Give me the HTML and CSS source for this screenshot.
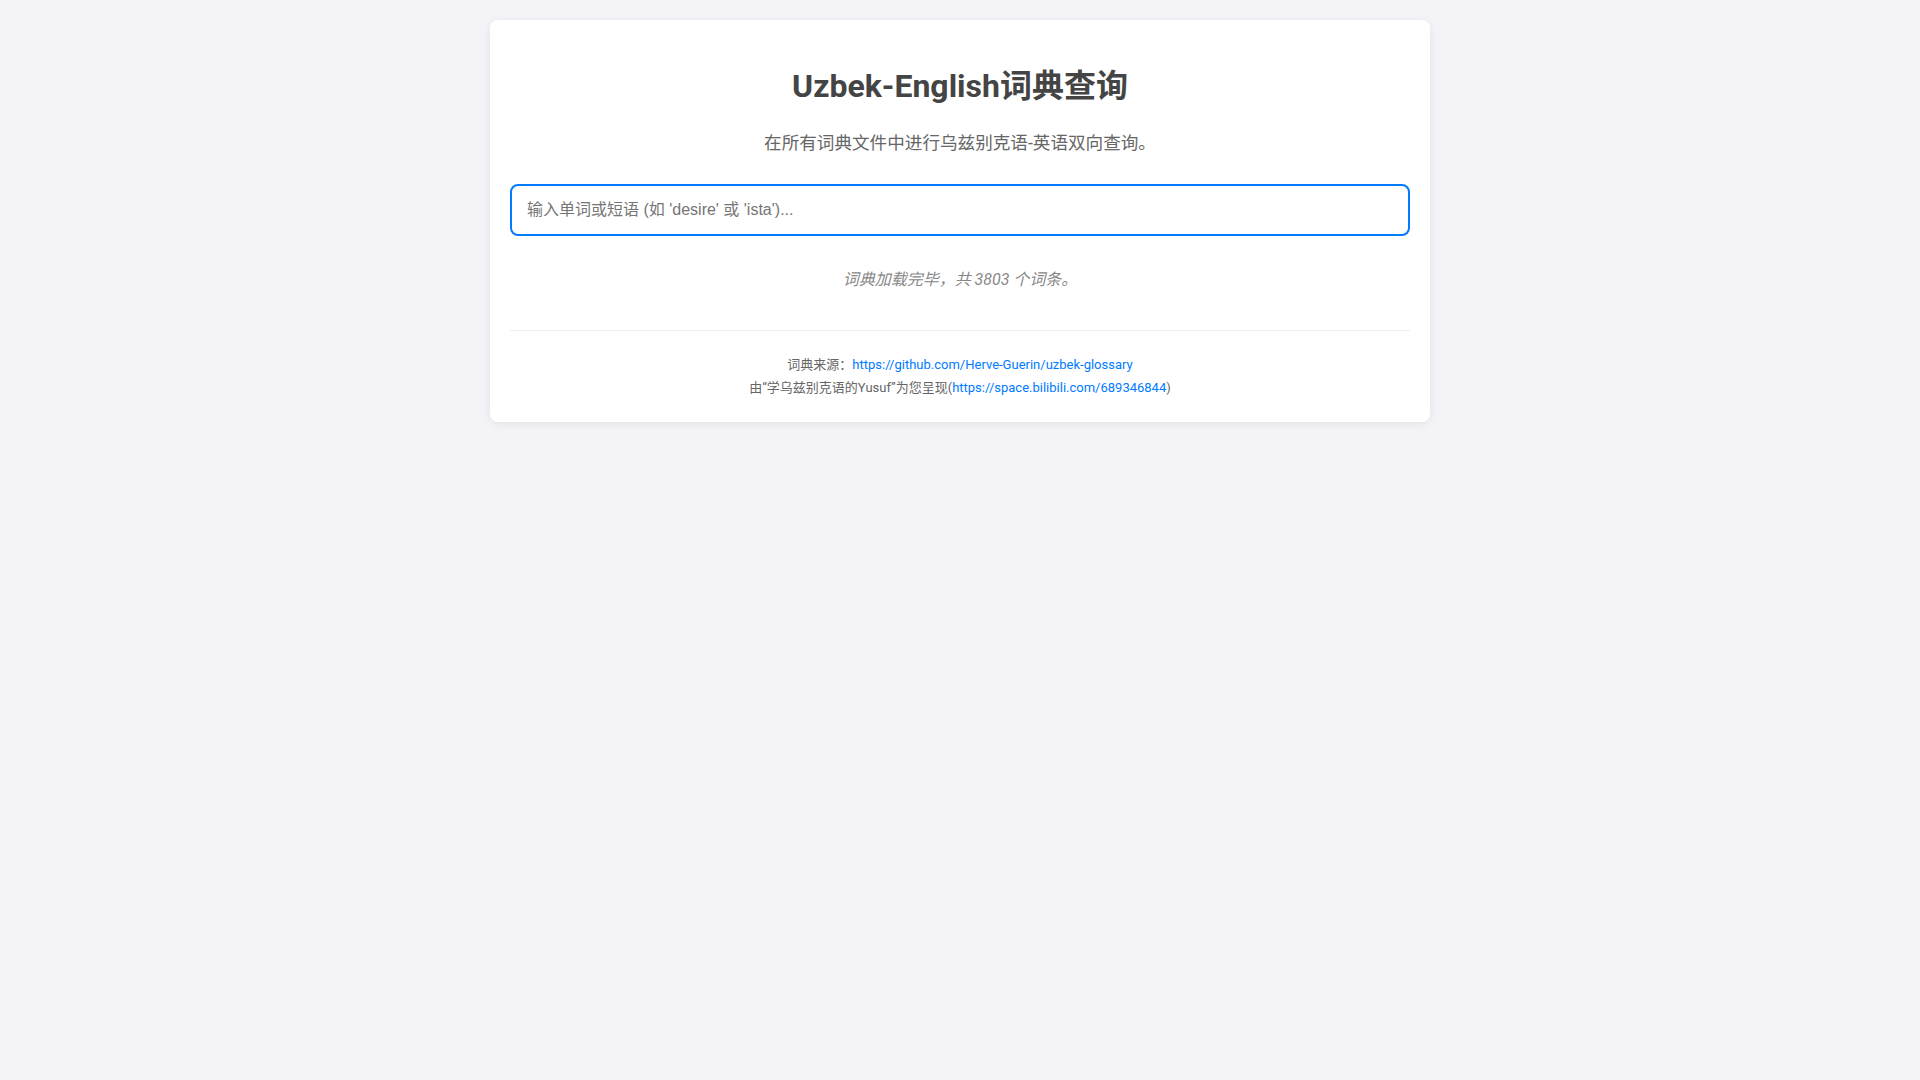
FILE: index.html
```html
<!DOCTYPE html>
<html lang="zh-CN">
<head>
<meta charset="utf-8">
<title>Uzbek-English词典查询</title>
<link rel="stylesheet" href="styles.css">
</head>
<body>
<div class="container">
  <h1 class="title">Uzbek-English词典查询</h1>
  <p class="subtitle">在所有词典文件中进行乌兹别克语-英语双向查询。</p>
  <input class="search" type="text" placeholder="输入单词或短语 (如 'desire' 或 'ista')..." autofocus>
  <div class="results">
    <p class="status">词典加载完毕，共 3803 个词条。</p>
  </div>
  <div class="footer">
    <p class="footer-line">词典来源：<a class="link" href="#">https://github.com/Herve-Guerin/uzbek-glossary</a></p>
    <p class="footer-line">由“学乌兹别克语的Yusuf”为您呈现(<a class="link" href="#">https://space.bilibili.com/689346844</a>)</p>
  </div>
</div>
</body>
</html>
```

FILE: styles.css
```css
html, body {
  margin: 0;
  padding: 0;
}
body {
  background: #f4f4f8;
  font-family: Roboto, "Noto Sans CJK SC", sans-serif;
  line-height: 1.6;
  color: #333;
  padding: 20px;
}
.container {
  max-width: 900px;
  margin: 0 auto;
  background: #fff;
  padding: 20px 20px 23px;
  border-radius: 8px;
  box-shadow: 0 2px 10px rgba(0, 0, 0, 0.08);
}
.title {
  text-align: center;
  color: #444;
  font-size: 32px;
  font-weight: 700;
  margin: 21px 0 0;
}
.subtitle {
  text-align: center;
  color: #666;
  font-size: 17.6px;
  margin: 17px 0 0;
}
.search {
  display: block;
  box-sizing: border-box;
  width: 100%;
  margin: 27px 0 0;
  padding: 15px;
  font-family: "Liberation Sans", "Noto Sans CJK SC", sans-serif;
  font-size: 16px;
  border: 2px solid #007bff;
  border-radius: 8px;
  outline: none;
  color: #333;
}
.search::placeholder {
  color: #757575;
}
.results {
  padding-top: 31px;
}
.status {
  margin: 0;
  text-align: center;
  font-style: italic;
  color: #888;
  font-size: 16px;
}
.footer {
  margin-top: 37px;
  border-top: 1px solid #eee;
  padding-top: 22px;
  text-align: center;
  font-size: 13px;
  color: #666;
}
.footer-line {
  margin: 0;
  line-height: 23px;
}
.link {
  color: #007bff;
  text-decoration: none;
}
```
